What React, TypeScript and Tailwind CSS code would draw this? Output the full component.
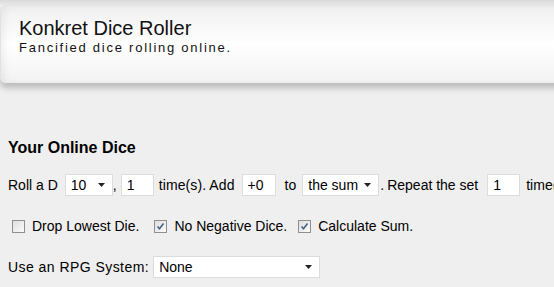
import type { ReactNode } from "react";

const font = "font-['Liberation_Sans',Arial,sans-serif]";

function DropBox({ value, className }: { value: string; className: string }) {
  return (
    <div
      className={`shrink-0 h-[22px] flex items-center justify-between bg-white border border-[#dcdcdc] pl-[5px] pr-[7px] ${className}`}
    >
      <span>{value}</span>
      <svg width="7" height="4" viewBox="0 0 7 4">
        <path d="M0 0h7L3.5 4z" fill="#222" />
      </svg>
    </div>
  );
}

function TextBox({ value, className }: { value: string; className: string }) {
  return (
    <input
      defaultValue={value}
      className={`shrink-0 h-[22px] bg-white border border-[#dcdcdc] px-[5px] text-[14px] text-black outline-none ${className} ${font}`}
    />
  );
}

function Check({ checked, children }: { checked?: boolean; children: ReactNode }) {
  return (
    <label className="shrink-0 flex items-center">
      <span className="ml-[4px] mr-[7px] w-[13px] h-[13px] border border-[#8f8f8f] bg-gradient-to-br from-[#dedede] to-[#fbfbfb] flex items-center justify-center">
        {checked && (
          <svg width="9" height="9" viewBox="0 0 9 9">
            <path d="M1.5 4.5l2 2.2L7.5 1.5" stroke="#4a5f8a" strokeWidth="1.6" fill="none" />
          </svg>
        )}
      </span>
      {children}
    </label>
  );
}

export default function App() {
  return (
    <div className={`w-[554px] h-[287px] overflow-hidden bg-[#efefef] text-black ${font}`}>
      <div className="h-[5px] bg-gradient-to-b from-[#d9d9d9] to-[#e9e9e9]" />
      <div className="w-[600px] h-[78px] rounded-l-[6px] border-t border-l border-[#e2e2e2] bg-gradient-to-b from-[#f0f0f0] via-white to-[#f2f2f2] shadow-[0_5px_6px_rgba(0,0,0,0.22),inset_4px_0_6px_rgba(0,0,0,0.05)] pl-[18px] pt-[10px]">
        <div className="text-[20px] leading-[24px] text-[#111]">Konkret Dice Roller</div>
        <div className="text-[13px] leading-[15px] tracking-[1.75px] text-[#111]">Fancified dice rolling online.</div>
      </div>

      <div className="px-[8px] pt-[56px] text-[14px]">
        <h2 className="font-bold text-[16px] leading-[18px]">Your Online Dice</h2>

        <div className="mt-[17px] h-[22px] whitespace-nowrap flex items-center">
          <span className="shrink-0">Roll a D</span>
          <DropBox value="10" className="ml-[7px] w-[48px]" />
          <span className="shrink-0">,</span>
          <TextBox value="1" className="ml-[4px] w-[33px]" />
          <span className="shrink-0 ml-[5px] tracking-[0.1px]">time(s). Add</span>
          <TextBox value="+0" className="ml-[7px] w-[34px]" />
          <span className="shrink-0 ml-[9px]">to</span>
          <DropBox value="the sum" className="ml-[6px] w-[77px]" />
          <span className="shrink-0 ml-[1px]">.</span>
          <span className="shrink-0 ml-[3px]">Repeat the set</span>
          <TextBox value="1" className="ml-[9px] w-[33px]" />
          <span className="shrink-0 ml-[6px]">time(s).</span>
        </div>

        <div className="mt-[21px] h-[18px] flex items-center whitespace-nowrap">
          <Check>Drop Lowest Die.</Check>
          <span className="w-[11px] shrink-0" />
          <Check checked>No Negative Dice.</Check>
          <span className="w-[7px] shrink-0" />
          <Check checked>Calculate Sum.</Check>
        </div>

        <div className="mt-[21px] h-[22px] flex items-center whitespace-nowrap">
          <span className="shrink-0 tracking-[0.45px]">Use an RPG System:</span>
          <DropBox value="None" className="ml-[4px] w-[167px]" />
        </div>
      </div>
    </div>
  );
}
